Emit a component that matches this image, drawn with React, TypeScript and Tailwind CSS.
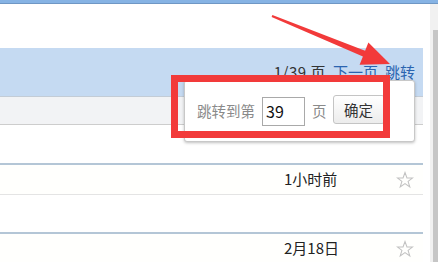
const font = { fontFamily: '"Noto Sans CJK SC", "Liberation Sans", sans-serif' };

function Star() {
  return (
    <svg width="18" height="18" viewBox="0 0 24 24" fill="none" stroke="#c2c2c2" strokeWidth="1.4" strokeLinejoin="miter">
      <polygon points="12,2 14.6,9.2 22.2,9.3 16.1,13.9 18.4,21.2 12,16.8 5.6,21.2 7.9,13.9 1.8,9.3 9.4,9.2" />
    </svg>
  );
}

function Row({ date }: { date: string }) {
  return (
    <div className="border-t-2 border-t-[#b4c6d6] border-b border-b-[#e4e4e4] h-[32px] grid grid-cols-[1fr_112px_27px] items-center bg-[#fffffd]">
      <div />
      <span className="text-[15px] text-[#222]">{date}</span>
      <Star />
    </div>
  );
}

export default function App() {
  return (
    <div className="relative w-[438px] h-[262px] overflow-hidden bg-white" style={font}>
      <div className="h-[4px] bg-[#86b3e4] border-b border-b-[#6f97c4]" />
      <div className="flex">
        <div className="w-[423px]">
          <div className="h-[44px]" />
          <div className="h-[48px] bg-[#c5daf2] flex items-center justify-end pr-[8px] text-[15px] gap-[7px]">
            <span className="text-[#333] tracking-[0.5px]">1/39 页</span>
            <a className="text-[#2a64b0]">下一页</a>
            <a className="text-[#2a64b0]">跳转</a>
          </div>
          <div className="h-[29px] bg-[#f2f3f5] border-t border-t-[#c3ccd6] border-b border-b-[#cdcdcd]" />
          <div className="h-[38px]" />
          <Row date="1小时前" />
          <div className="h-[37px]" />
          <Row date="2月18日" />
        </div>
        <div className="w-[7px]" />
        <div className="w-[8px] bg-[#f1f1f1] flex justify-end pt-[26px]">
          <div className="w-[5px] h-[240px] bg-[#c6c6c6]" />
        </div>
      </div>

      <div className="absolute left-[184px] top-[80px] w-[231px] h-[62px] bg-white border border-[#c8c8c8] rounded-[3px] shadow-[0_1px_3px_rgba(0,0,0,0.25)] flex items-center pl-[12px] text-[14px]">
        <span className="text-[#8a8a8a] text-[14.5px]">跳转到第</span>
        <input
          readOnly
          value="39"
          className="ml-[7px] w-[43px] h-[29px] border border-[#a9a9a9] pl-[3px] text-[16px] text-[#111] outline-none"
          style={font}
        />
        <span className="ml-[7px] text-[#8a8a8a] text-[14.5px]">页</span>
        <button className="ml-[6px] mb-[3px] w-[52px] h-[29px] rounded-[3px] border border-[#c4c4c4] bg-gradient-to-b from-white to-[#ececec] text-[#333] text-[14.5px]">
          确定
        </button>
      </div>

      <div className="absolute left-[171px] top-[75px] w-[219px] h-[63px] border-[7px] border-[#f23a3a]" />

      <svg className="absolute left-0 top-0" width="438" height="262" viewBox="0 0 438 262">
        <polygon
          points="272.4,14.9 365.1,50.8 368.4,42.5 390,64 359.6,64.7 362.9,56.4 271.6,17.1"
          fill="#f23a3a"
        />
      </svg>
    </div>
  );
}
